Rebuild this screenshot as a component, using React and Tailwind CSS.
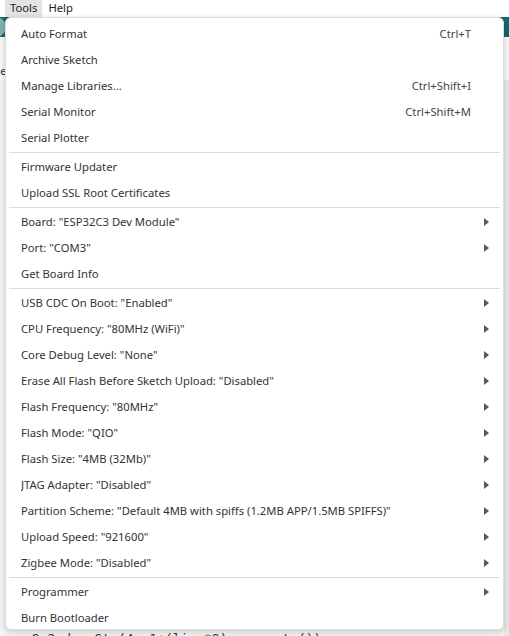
import React from 'react';

const groups = [
  [
    { label: 'Auto Format', shortcut: 'Ctrl+T' },
    { label: 'Archive Sketch' },
    { label: 'Manage Libraries...', shortcut: 'Ctrl+Shift+I' },
    { label: 'Serial Monitor', shortcut: 'Ctrl+Shift+M' },
    { label: 'Serial Plotter' },
  ],
  [
    { label: 'Firmware Updater' },
    { label: 'Upload SSL Root Certificates' },
  ],
  [
    { label: 'Board: "ESP32C3 Dev Module"', sub: true },
    { label: 'Port: "COM3"', sub: true },
    { label: 'Get Board Info' },
  ],
  [
    { label: 'USB CDC On Boot: "Enabled"', sub: true },
    { label: 'CPU Frequency: "80MHz (WiFi)"', sub: true },
    { label: 'Core Debug Level: "None"', sub: true },
    { label: 'Erase All Flash Before Sketch Upload: "Disabled"', sub: true },
    { label: 'Flash Frequency: "80MHz"', sub: true },
    { label: 'Flash Mode: "QIO"', sub: true },
    { label: 'Flash Size: "4MB (32Mb)"', sub: true },
    { label: 'JTAG Adapter: "Disabled"', sub: true },
    { label: 'Partition Scheme: "Default 4MB with spiffs (1.2MB APP/1.5MB SPIFFS)"', sub: true },
    { label: 'Upload Speed: "921600"', sub: true },
    { label: 'Zigbee Mode: "Disabled"', sub: true },
  ],
  [
    { label: 'Programmer', sub: true },
    { label: 'Burn Bootloader' },
  ],
];

const Arrow = () => (
  <svg width="5" height="8" viewBox="0 0 5 8" className="block">
    <path d="M0 0 L5 4 L0 8 Z" fill="#5a5a5a" />
  </svg>
);

const MenuItem = ({ label, shortcut, sub }) => (
  <div className="flex items-center h-[26px] pl-[15px] pr-[14px] text-[#333333]">
    <span className="flex-1 truncate">{label}</span>
    {shortcut && <span className="text-[#444444]">{shortcut}</span>}
    <span className="w-[18px] flex justify-end">{sub && <Arrow />}</span>
  </div>
);

export default function App() {
  return (
    <div
      className="relative w-[509px] h-[636px] overflow-hidden bg-[#e9e9e9] text-[11.25px]"
      style={{ fontFamily: '"Noto Sans", "Open Sans", sans-serif' }}
    >
      {/* menubar */}
      <div className="h-[17px] bg-white flex items-center pl-[5px] text-[#222222]">
        <div className="h-full px-[5px] flex items-center bg-[#e3e3e3]">Tools</div>
        <div className="h-full px-[6px] flex items-center">Help</div>
      </div>
      {/* toolbar */}
      <div className="h-[20px] bg-[#17656a] flex items-center">
        <div className="w-[20px] h-[20px] rounded-full bg-[#7fb0b2] -ml-[14px]" />
      </div>
      {/* tabs */}
      <div className="h-[43px] bg-[#f7f7f7] flex items-end text-[#333333]">
        <span className="-ml-[6px]">Sel</span>
      </div>
      {/* editor */}
      <div className="h-[556px] bg-[#f4f4f4] flex justify-end">
        <div className="w-[5px] h-full bg-[#e6e6e6]" />
      </div>
      <div
        className="absolute left-[24px] top-[629px] text-[13px] text-[#333333] whitespace-pre"
        style={{ fontFamily: '"DejaVu Sans Mono", monospace' }}
      >
        u8g2.drawStr(4, 1+(line*8), s.c_str());
      </div>

      {/* tools menu */}
      <div className="absolute left-[5px] top-[17px] w-[499px] h-[613px] bg-white rounded-[6px] border border-[#dedede] shadow-[0_2px_6px_rgba(0,0,0,0.18)] pt-[3px]">
        {groups.map((g, gi) => (
          <div key={gi}>
            {gi > 0 && <div className="h-px bg-[#dadada] my-px mx-[3px]" />}
            {g.map((item) => (
              <MenuItem key={item.label} {...item} />
            ))}
          </div>
        ))}
      </div>
    </div>
  );
}
